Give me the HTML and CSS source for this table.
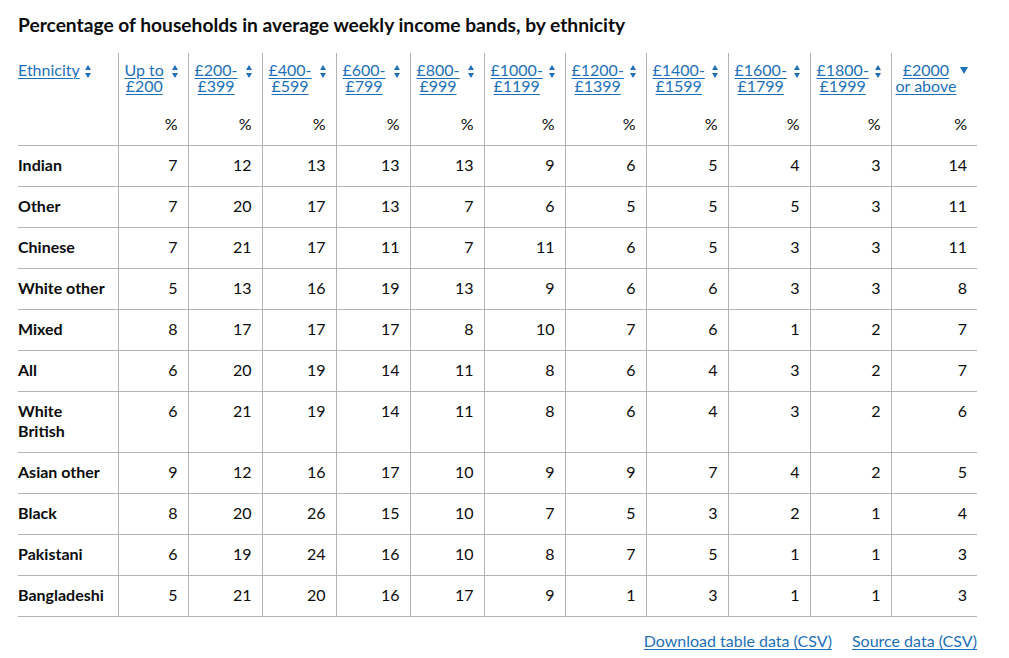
FILE: index.html
```html
<!DOCTYPE html>
<html lang="en">
<head>
<meta charset="utf-8">
<title>Percentage of households in average weekly income bands, by ethnicity</title>
<link rel="stylesheet" href="styles.css">
</head>
<body>
<div class="page">
  <h2 class="title">Percentage of households in average weekly income bands, by ethnicity</h2>
  <table class="data">
    <colgroup>
      <col class="c-eth"><col class="c-70"><col class="c-74"><col class="c-74"><col class="c-74"><col class="c-74"><col class="c-81"><col class="c-81"><col class="c-82"><col class="c-82"><col class="c-81"><col class="c-86">
    </colgroup>
    <thead>
      <tr class="head-links">
        <th class="first"><div class="th-inner first-inner"><a href="#">Ethnicity</a><svg class="sort" viewBox="0 0 6 13" width="6" height="13"><polygon points="0,5 3,0 6,5"/><polygon points="0,8 6,8 3,13"/></svg></div></th>
        <th><div class="th-inner"><a href="#">Up to<br>£200</a><svg class="sort" viewBox="0 0 6 13" width="6" height="13"><polygon points="0,5 3,0 6,5"/><polygon points="0,8 6,8 3,13"/></svg></div></th>
        <th><div class="th-inner"><a href="#">£200-<br>£399</a><svg class="sort" viewBox="0 0 6 13" width="6" height="13"><polygon points="0,5 3,0 6,5"/><polygon points="0,8 6,8 3,13"/></svg></div></th>
        <th><div class="th-inner"><a href="#">£400-<br>£599</a><svg class="sort" viewBox="0 0 6 13" width="6" height="13"><polygon points="0,5 3,0 6,5"/><polygon points="0,8 6,8 3,13"/></svg></div></th>
        <th><div class="th-inner"><a href="#">£600-<br>£799</a><svg class="sort" viewBox="0 0 6 13" width="6" height="13"><polygon points="0,5 3,0 6,5"/><polygon points="0,8 6,8 3,13"/></svg></div></th>
        <th><div class="th-inner"><a href="#">£800-<br>£999</a><svg class="sort" viewBox="0 0 6 13" width="6" height="13"><polygon points="0,5 3,0 6,5"/><polygon points="0,8 6,8 3,13"/></svg></div></th>
        <th><div class="th-inner"><a href="#">£1000-<br>£1199</a><svg class="sort" viewBox="0 0 6 13" width="6" height="13"><polygon points="0,5 3,0 6,5"/><polygon points="0,8 6,8 3,13"/></svg></div></th>
        <th><div class="th-inner"><a href="#">£1200-<br>£1399</a><svg class="sort" viewBox="0 0 6 13" width="6" height="13"><polygon points="0,5 3,0 6,5"/><polygon points="0,8 6,8 3,13"/></svg></div></th>
        <th><div class="th-inner"><a href="#">£1400-<br>£1599</a><svg class="sort" viewBox="0 0 6 13" width="6" height="13"><polygon points="0,5 3,0 6,5"/><polygon points="0,8 6,8 3,13"/></svg></div></th>
        <th><div class="th-inner"><a href="#">£1600-<br>£1799</a><svg class="sort" viewBox="0 0 6 13" width="6" height="13"><polygon points="0,5 3,0 6,5"/><polygon points="0,8 6,8 3,13"/></svg></div></th>
        <th><div class="th-inner"><a href="#">£1800-<br>£1999</a><svg class="sort" viewBox="0 0 6 13" width="6" height="13"><polygon points="0,5 3,0 6,5"/><polygon points="0,8 6,8 3,13"/></svg></div></th>
        <th class="last-head"><div class="th-inner"><a href="#" class="nowrap">£2000<br>or above</a><svg class="sort-desc" viewBox="0 0 8 7" width="8" height="7"><polygon points="0,0 8,0 4,7"/></svg></div></th>
      </tr>
      <tr class="head-units">
        <th class="first"></th>
        <th>%</th><th>%</th><th>%</th><th>%</th><th>%</th><th>%</th><th>%</th><th>%</th><th>%</th><th>%</th><th>%</th>
      </tr>
    </thead>
    <tbody>
      <tr><th class="first">Indian</th><td>7</td><td>12</td><td>13</td><td>13</td><td>13</td><td>9</td><td>6</td><td>5</td><td>4</td><td>3</td><td>14</td></tr>
      <tr><th class="first">Other</th><td>7</td><td>20</td><td>17</td><td>13</td><td>7</td><td>6</td><td>5</td><td>5</td><td>5</td><td>3</td><td>11</td></tr>
      <tr><th class="first">Chinese</th><td>7</td><td>21</td><td>17</td><td>11</td><td>7</td><td>11</td><td>6</td><td>5</td><td>3</td><td>3</td><td>11</td></tr>
      <tr><th class="first">White other</th><td>5</td><td>13</td><td>16</td><td>19</td><td>13</td><td>9</td><td>6</td><td>6</td><td>3</td><td>3</td><td>8</td></tr>
      <tr><th class="first">Mixed</th><td>8</td><td>17</td><td>17</td><td>17</td><td>8</td><td>10</td><td>7</td><td>6</td><td>1</td><td>2</td><td>7</td></tr>
      <tr><th class="first">All</th><td>6</td><td>20</td><td>19</td><td>14</td><td>11</td><td>8</td><td>6</td><td>4</td><td>3</td><td>2</td><td>7</td></tr>
      <tr><th class="first">White British</th><td>6</td><td>21</td><td>19</td><td>14</td><td>11</td><td>8</td><td>6</td><td>4</td><td>3</td><td>2</td><td>6</td></tr>
      <tr><th class="first">Asian other</th><td>9</td><td>12</td><td>16</td><td>17</td><td>10</td><td>9</td><td>9</td><td>7</td><td>4</td><td>2</td><td>5</td></tr>
      <tr><th class="first">Black</th><td>8</td><td>20</td><td>26</td><td>15</td><td>10</td><td>7</td><td>5</td><td>3</td><td>2</td><td>1</td><td>4</td></tr>
      <tr><th class="first">Pakistani</th><td>6</td><td>19</td><td>24</td><td>16</td><td>10</td><td>8</td><td>7</td><td>5</td><td>1</td><td>1</td><td>3</td></tr>
      <tr><th class="first">Bangladeshi</th><td>5</td><td>21</td><td>20</td><td>16</td><td>17</td><td>9</td><td>1</td><td>3</td><td>1</td><td>1</td><td>3</td></tr>
    </tbody>
  </table>
  <div class="downloads">
    <a href="#">Download table data (CSV)</a>
    <a href="#">Source data (CSV)</a>
  </div>
</div>
</body>
</html>
```

FILE: styles.css
```css
html, body {
  margin: 0;
  padding: 0;
  background: #ffffff;
}

body {
  font-family: "Lato", "Liberation Sans", Arial, sans-serif;
  color: #0b0c0c;
  font-size: 16px;
}

.page {
  width: 959px;
  padding: 12px 0 0 18px;
}

.title {
  margin: 0;
  font-size: 19.2px;
  line-height: 25px;
  font-weight: 700;
}

a {
  color: #1d70b8;
  text-decoration: underline;
  text-decoration-thickness: 1px;
  text-underline-offset: 2px;
}

.data {
  margin-top: 16px;
  width: 959px;
  table-layout: fixed;
  border-collapse: collapse;
}

.c-eth { width: 100px; }
.c-70 { width: 70px; }
.c-74 { width: 74px; }
.c-81 { width: 81px; }
.c-82 { width: 82px; }
.c-86 { width: 86px; }

.data th,
.data td {
  padding: 9px 10px 11px 6px;
  line-height: 20px;
  border-left: 1px solid #b1b4b6;
  vertical-align: top;
  text-align: right;
  font-weight: 400;
}

.data .first {
  border-left: 0;
  padding-left: 0;
  text-align: left;
  font-weight: 700;
}

.data tbody tr th,
.data tbody tr td,
.head-units th {
  border-bottom: 1px solid #b1b4b6;
}

.head-links th {
  padding-top: 9px;
  padding-bottom: 11px;
  line-height: 16px;
}

.head-links th.last-head {
  padding-left: 4px;
  padding-right: 9px;
}

.th-inner {
  display: flex;
  justify-content: space-between;
  align-items: flex-start;
}

.th-inner a {
  display: block;
  text-align: center;
  line-height: 16px;
  font-weight: 400;
}

.th-inner a.nowrap {
  white-space: nowrap;
}

.first-inner {
  justify-content: flex-start;
  gap: 5px;
}

.sort {
  flex: none;
  margin-top: 3px;
  fill: #1d70b8;
}

.sort-desc {
  flex: none;
  margin-top: 5px;
  fill: #1d70b8;
}

.head-units th {
  line-height: 20px;
}

.downloads {
  display: flex;
  justify-content: flex-end;
  gap: 20px;
  margin-top: 14px;
  line-height: 20px;
}
```
